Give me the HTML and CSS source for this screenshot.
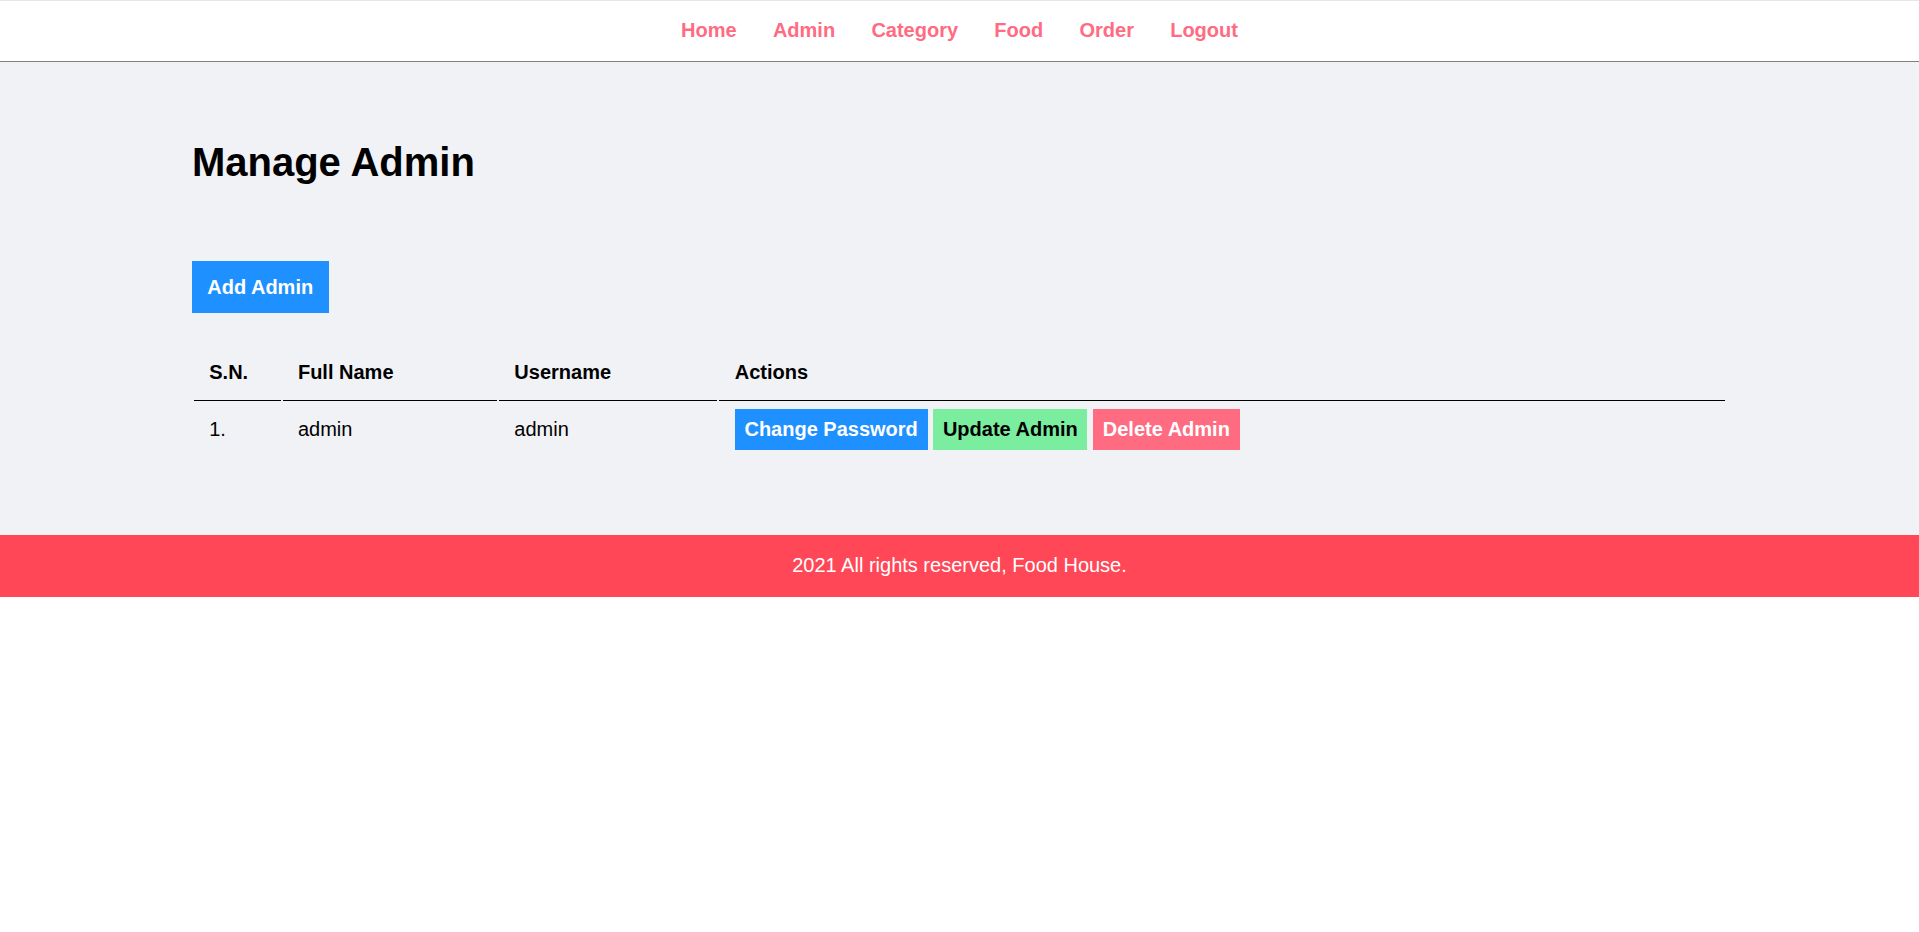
FILE: index.html
```html
<!DOCTYPE html>
<html lang="en">
<head>
<meta charset="utf-8">
<title>Food House - Admin</title>
<link rel="stylesheet" href="styles.css">
</head>
<body>
<div class="menu text-center">
  <div class="wrapper">
    <ul>
      <li><a href="#">Home</a></li>
      <li><a href="#">Admin</a></li>
      <li><a href="#">Category</a></li>
      <li><a href="#">Food</a></li>
      <li><a href="#">Order</a></li>
      <li><a href="#">Logout</a></li>
    </ul>
  </div>
</div>

<div class="main-content">
  <div class="wrapper">
    <h1>Manage Admin</h1>
    <div class="toolbar">
      <a href="#" class="btn-primary btn-lg">Add Admin</a>
    </div>
    <table class="tbl-full">
      <tr>
        <th class="col-sn">S.N.</th>
        <th class="col-name">Full Name</th>
        <th class="col-user">Username</th>
        <th>Actions</th>
      </tr>
      <tr>
        <td>1.</td>
        <td>admin</td>
        <td>admin</td>
        <td>
          <a href="#" class="btn-primary btn-sm">Change Password</a>
          <a href="#" class="btn-secondary btn-sm">Update Admin</a>
          <a href="#" class="btn-danger btn-sm">Delete Admin</a>
        </td>
      </tr>
    </table>
  </div>
</div>

<div class="footer text-center">
  <div class="wrapper">
    <p>2021 All rights reserved, Food House.</p>
  </div>
</div>
</body>
</html>
```

FILE: styles.css
```css
* {
  margin: 0;
  padding: 0;
  font-family: "Liberation Sans", Arial, Helvetica, sans-serif;
}

body {
  font-size: 20px;
  line-height: 23px;
  background: #ffffff;
  color: #000000;
}

.wrapper {
  width: 80%;
  padding: 1%;
  margin: 0 auto;
}

.text-center {
  text-align: center;
}

.menu {
  border-bottom: 1px solid #808080;
  box-shadow: inset 0 1px 0 #e6e6e6;
}

.menu ul {
  list-style-type: none;
}

.menu ul li {
  display: inline;
  padding: 15.35px;
}

.menu ul li a {
  text-decoration: none;
  font-weight: bold;
  color: #ff6b81;
}

.main-content {
  background-color: #f1f2f6;
  padding: 3% 0;
}

.main-content h1 {
  font-size: 40px;
  line-height: 46px;
  font-weight: bold;
  margin-bottom: 91px;
}

.toolbar {
  margin-bottom: 45px;
}

.btn-primary,
.btn-secondary,
.btn-danger {
  text-decoration: none;
  font-weight: bold;
}

.btn-primary {
  background-color: #1e90ff;
  color: #ffffff;
}

.btn-secondary {
  background-color: #7bed9f;
  color: #000000;
}

.btn-danger {
  background-color: #ff6b81;
  color: #ffffff;
}

.btn-lg {
  padding: 15.35px;
}

.btn-sm {
  padding: 9.4px 9.75px;
}

.tbl-full {
  width: 100%;
  table-layout: fixed;
  border-spacing: 2px;
}

table tr th {
  border-bottom: 1px solid #000000;
  padding: 15.35px;
  text-align: left;
  font-weight: bold;
}

table tr td {
  padding: 15.35px;
}

.col-sn {
  width: 56px;
}

.col-name {
  width: 183.7px;
}

.col-user {
  width: 187.7px;
}

.footer {
  background-color: #ff4757;
  color: #ffffff;
}
```
